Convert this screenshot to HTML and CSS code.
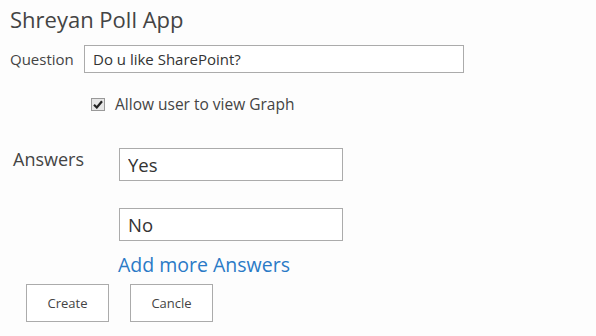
FILE: index.html
```html
<!DOCTYPE html>
<html lang="en">
<head>
    <meta charset="UTF-8">
    <meta name="viewport" content="width=device-width, initial-scale=1.0">
    <title>Shreyan Poll App</title>
    <link rel="stylesheet" href="styles.css">
</head>
<body>

    <div id="container">

        <h2 class="titulo">Shreyan Poll App</h2>

        <div class="linhaPergunta">
            <label for="txtPergunta">Question</label>
            <input type="text" id="txtPergunta" class="caixaPergunta" value="Do u like SharePoint?">
        </div>

        <div class="linhaGrafico">
            <span class="caixaMarcada">
                <svg width="10" height="9" viewBox="0 0 10 9"><path d="M1 4.8 L3.8 7.5 L9 1.2" fill="none" stroke="#222" stroke-width="2.2"/></svg>
            </span>
            <label class="textoGrafico">Allow user to view Graph</label>
        </div>

        <div class="blocoRespostas">
            <label class="rotuloRespostas">Answers</label>
            <div class="listaRespostas">
                <input type="text" class="caixaResposta" value="Yes">
                <input type="text" class="caixaResposta" value="No">
                <a href="#" class="linkMais">Add more Answers</a>
            </div>
        </div>

        <div class="linhaBotoes">
            <input type="button" value="Create" class="botao">
            <input type="button" value="Cancle" class="botao">
        </div>

    </div>

</body>
</html>
```

FILE: styles.css
```css
body{
    margin: 0;
    font-family: "Open Sans", "Noto Sans", sans-serif;
    background-color: #fdfdfd;
    color: #444;
}
#container{
    padding: 4px 0 0 10px;
}
.titulo{
    margin: 0;
    font-size: 22px;
    font-weight: normal;
    color: #444;
    line-height: 30px;
}
.linhaPergunta{
    display: flex;
    align-items: center;
    margin-top: 11px;
}
.linhaPergunta label{
    font-size: 15px;
    width: 74px;
}
.caixaPergunta{
    width: 380px;
    height: 28px;
    box-sizing: border-box;
    border: 1px solid #ababab;
    padding: 0 8px;
    font-family: inherit;
    font-size: 15px;
    color: #333;
    background: #fff;
}
.linhaGrafico{
    display: flex;
    align-items: center;
    margin: 20px 0 0 81px;
}
.caixaMarcada{
    width: 14px;
    height: 13px;
    box-sizing: border-box;
    border: 1px solid #999;
    background: #e6e6e6;
    display: flex;
    align-items: center;
    justify-content: center;
    margin-right: 10px;
}
.textoGrafico{
    font-size: 15.5px;
}
.blocoRespostas{
    display: flex;
    margin-top: 33px;
}
.rotuloRespostas{
    font-size: 18px;
    width: 109px;
    padding-left: 3px;
    box-sizing: border-box;
    line-height: 22px;
}
.listaRespostas{
    display: flex;
    flex-direction: column;
    align-items: flex-start;
}
.caixaResposta{
    width: 224px;
    height: 33px;
    box-sizing: border-box;
    border: 1px solid #ababab;
    padding: 0 8px;
    font-family: inherit;
    font-size: 18.5px;
    color: #333;
    background: #fff;
    margin-bottom: 27px;
}
.caixaResposta + .caixaResposta{
    margin-bottom: 12px;
}
.linkMais{
    font-size: 19.5px;
    color: #2a7ac6;
    text-decoration: none;
    line-height: 24px;
    margin-left: -1px;
}
.linhaBotoes{
    display: flex;
    gap: 21px;
    margin: 7px 0 0 16px;
}
.botao{
    width: 83px;
    height: 38px;
    border: 1px solid #ababab;
    background: #fff;
    font-family: inherit;
    font-size: 13px;
    color: #444;
}
```
